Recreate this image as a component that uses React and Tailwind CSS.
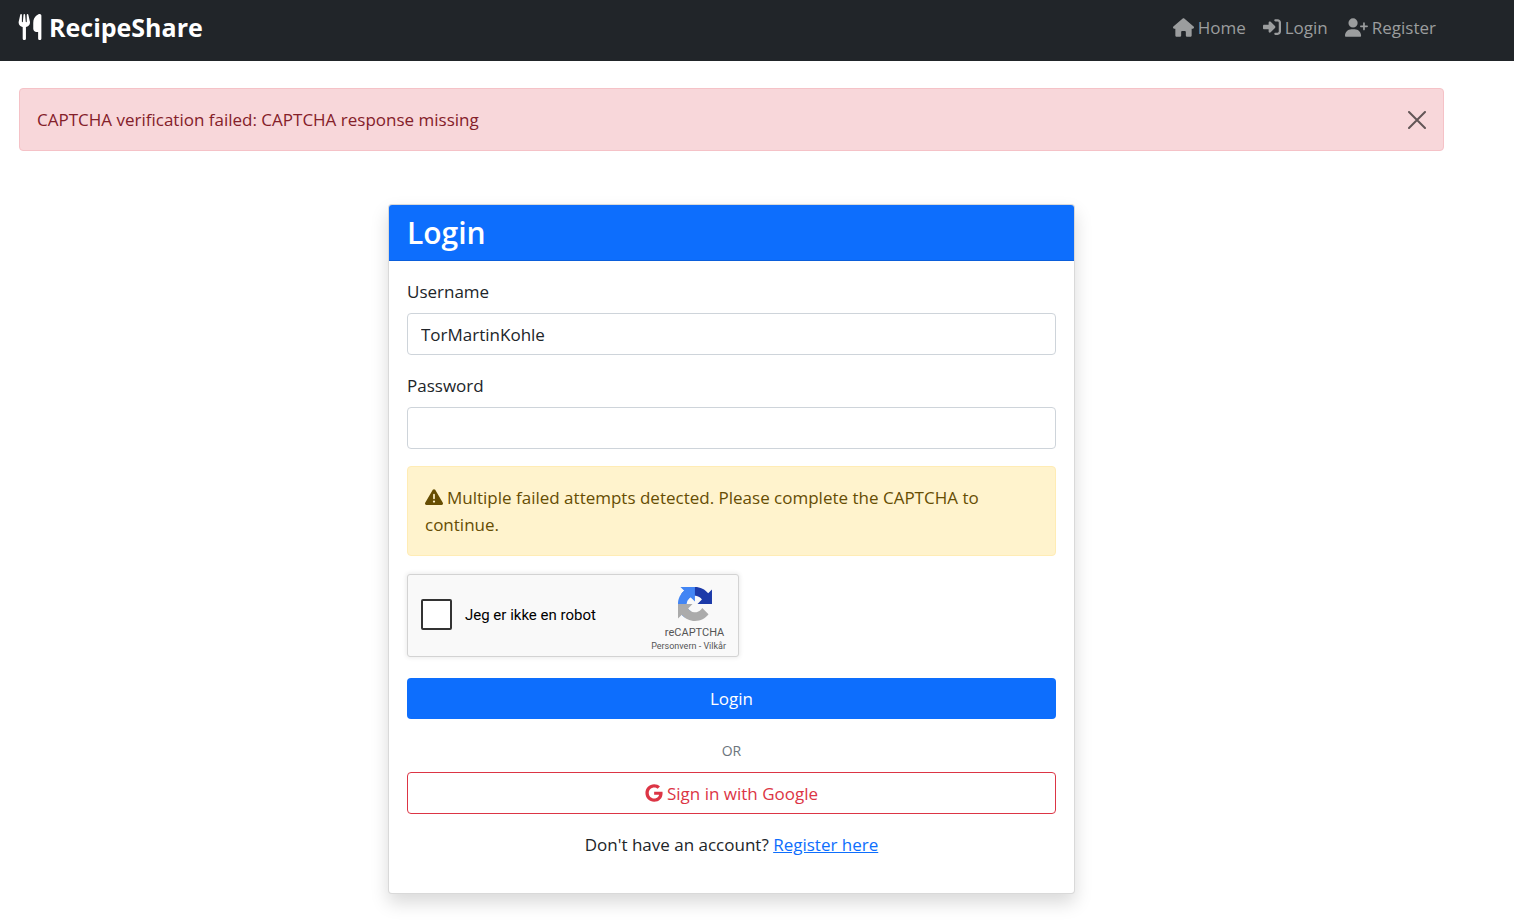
import {
  FaGoogle,
  FaHouse,
  FaRightToBracket,
  FaTriangleExclamation,
  FaUserPlus,
  FaUtensils,
} from 'react-icons/fa6';

function NavLink({ icon: Icon, iconSize, children }) {
  return (
    <a href="#" className="flex items-center gap-1 text-[#9b9d9e] hover:text-white">
      <Icon className={iconSize} aria-hidden="true" />
      {children}
    </a>
  );
}

function Navbar() {
  return (
    <header className="bg-[#212529]">
      <div className="flex h-[61px] max-w-[1463px] items-center justify-between pr-[27px] pb-[7px] pl-[17px]">
        <a href="#" className="flex items-center gap-[6px] text-[25px] leading-9 font-bold text-white">
          <FaUtensils className="size-[26px]" aria-hidden="true" />
          RecipeShare
        </a>
        <nav className="flex items-center gap-[17px]">
          <NavLink icon={FaHouse} iconSize="size-[21px]">Home</NavLink>
          <NavLink icon={FaRightToBracket} iconSize="size-[18px]">Login</NavLink>
          <NavLink icon={FaUserPlus} iconSize="size-[23px]">Register</NavLink>
        </nav>
      </div>
    </header>
  );
}

function ErrorAlert() {
  return (
    <div
      role="alert"
      className="flex h-[63px] items-center justify-between rounded border border-[#f5c2c7] bg-[#f8d7da] px-[17px] text-[#842029]"
    >
      <span>CAPTCHA verification failed: CAPTCHA response missing</span>
      <button type="button" aria-label="Close" className="text-black opacity-60">
        <svg viewBox="0 0 18 18" className="size-[18px]" fill="none" stroke="currentColor" strokeWidth="2" strokeLinecap="round">
          <path d="M1 1l16 16M17 1L1 17" />
        </svg>
      </button>
    </div>
  );
}

function Field({ id, label, type, defaultValue }) {
  return (
    <div className="mb-[17px]">
      <label htmlFor={id} className="mb-2 block">
        {label}
      </label>
      <input
        id={id}
        type={type}
        defaultValue={defaultValue}
        className="block h-[42px] w-full rounded border border-[#ced4da] bg-white px-[13px] outline-none focus:border-[#86b7fe]"
      />
    </div>
  );
}

function RecaptchaLogo() {
  return (
    <svg viewBox="0 0 64 64" className="size-[34px]" aria-hidden="true">
      <path
        fill="#1c3aa9"
        d="M64 31.955l-.033-1.37V4.687l-7.16 7.16C50.948 4.674 42.033.093 32.05.093c-10.4 0-19.622 4.96-25.458 12.64l11.736 11.86a15.55 15.55 0 0 1 4.754-5.334c2.05-1.6 4.952-2.906 8.968-2.906.485 0 .86.057 1.135.163 4.976.393 9.288 3.14 11.828 7.124l-8.307 8.307L64 31.953"
      />
      <path
        fill="#4285f4"
        d="M31.862.094l-1.37.033H4.594l7.16 7.16C4.58 13.147 0 22.06 0 32.046c0 10.4 4.96 19.622 12.64 25.458L24.5 45.768a15.55 15.55 0 0 1-5.334-4.754c-1.6-2.05-2.906-4.952-2.906-8.968 0-.485.057-.86.163-1.135.393-4.976 3.14-9.288 7.124-11.828l8.307 8.307L31.86.095"
      />
      <path
        fill="#ababab"
        d="M.001 32.045l.033 1.37v25.898l7.16-7.16c5.86 7.173 14.774 11.754 24.76 11.754 10.4 0 19.622-4.96 25.458-12.64l-11.736-11.86a15.55 15.55 0 0 1-4.754 5.334c-2.05 1.6-4.952 2.906-8.968 2.906-.485 0-.86-.057-1.135-.163-4.976-.393-9.288-3.14-11.828-7.124l8.307-8.307c-10.522.04-22.4.066-27.295-.005"
      />
    </svg>
  );
}

function Recaptcha() {
  return (
    <div className="mb-[21px] flex h-[83px] w-[332px] max-w-full justify-between rounded-[3px] border border-[#d3d3d3] bg-[#f9f9f9] pr-3 pl-[13px] font-[Roboto,sans-serif] shadow-[0_0_4px_1px_rgba(0,0,0,0.08)]">
      <label htmlFor="not-robot" className="flex items-center gap-[13px] pb-[2px] text-[15px] leading-5 text-black">
        <input
          id="not-robot"
          type="checkbox"
          className="size-[31px] appearance-none rounded-xs border-2 border-[#333] bg-white checked:bg-[#4285f4]"
        />
        Jeg er ikke en robot
      </label>
      <div className="flex flex-col items-center pt-3 text-[#555]">
        <div className="flex flex-col items-center pl-3">
          <RecaptchaLogo />
          <span className="mt-1 text-[11px] leading-4">reCAPTCHA</span>
        </div>
        <div className="text-[9px] leading-[10px]">
          <a href="#">Personvern</a> - <a href="#">Vilkår</a>
        </div>
      </div>
    </div>
  );
}

function LoginCard() {
  return (
    <section className="mx-auto mt-[53px] w-full max-w-[687px] rounded border border-black/15 bg-white shadow-[0_9px_18px_rgba(0,0,0,0.15)]">
      <h1 className="flex h-14 items-center rounded-t-[3px] border-b border-[#0b5edb] bg-[#0d6efd] px-[18px] text-[30px] leading-9 font-semibold text-white">
        Login
      </h1>
      <form className="px-[18px] pt-[17px] pb-[35px]" onSubmit={(event) => event.preventDefault()}>
        <Field id="username" label="Username" type="text" defaultValue="TorMartinKohle" />
        <Field id="password" label="Password" type="password" />
        <div role="alert" className="mb-[18px] rounded border border-[#ffecb5] bg-[#fff3cd] px-[17px] py-[17px] text-[#664d03]">
          <FaTriangleExclamation className="mr-1 inline size-[18px] align-[-2px]" aria-hidden="true" />
          Multiple failed attempts detected. Please complete the CAPTCHA to continue.
        </div>
        <Recaptcha />
        <button type="submit" className="h-[41px] w-full rounded bg-[#0d6efd] text-white hover:bg-[#0b5ed7]">
          Login
        </button>
        <p className="mt-5 mb-[9px] text-center text-[14px] leading-6 text-[#6c757d]">OR</p>
        <button
          type="button"
          className="flex h-[42px] w-full items-center justify-center gap-1 rounded border border-[#dc3545] text-[#dc3545]"
        >
          <FaGoogle className="size-[18px]" aria-hidden="true" />
          Sign in with Google
        </button>
        <p className="mt-[17px] text-center">
          Don't have an account?{' '}
          <a href="#" className="text-[#0d6efd] underline">
            Register here
          </a>
        </p>
      </form>
    </section>
  );
}

export default function App() {
  return (
    <div className="min-h-screen bg-white font-['Open_Sans','Noto_Sans',sans-serif] text-[17px] leading-[27px] text-[#212529]">
      <Navbar />
      <main className="max-w-[1463px] px-[19px] pt-[27px] pb-[27px]">
        <ErrorAlert />
        <LoginCard />
      </main>
    </div>
  );
}
